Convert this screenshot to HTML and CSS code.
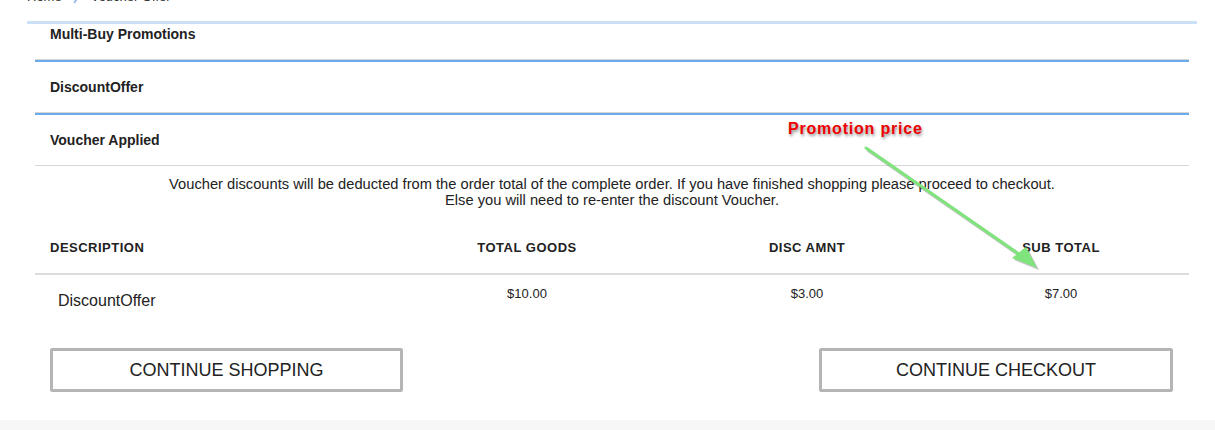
FILE: index.html
```html
<!DOCTYPE html>
<html>
<head>
<meta charset="utf-8">
<link rel="stylesheet" href="styles.css">
</head>
<body>
<div class="page">
  <nav class="breadcrumb">
    <span class="crumb">Home</span>
    <svg class="crumb-sep" width="10" height="14" viewBox="0 0 10 14"><path d="M2 13 L8 5" stroke="#8fb4e6" stroke-width="1.6" fill="none"/></svg>
    <span class="crumb">Voucher Offer</span>
  </nav>
  <div class="panel">
    <div class="panel-inner">
      <div class="section section-first">Multi-Buy Promotions</div>
      <div class="section">DiscountOffer</div>
      <div class="section">Voucher Applied</div>
      <p class="message">Voucher discounts will be deducted from the order total of the complete order. If you have finished shopping please proceed to checkout.<br>Else you will need to re-enter the discount Voucher.</p>
      <div class="table">
        <div class="thead">
          <div class="th th-desc">DESCRIPTION</div>
          <div class="th">TOTAL GOODS</div>
          <div class="th">DISC AMNT</div>
          <div class="th">SUB TOTAL</div>
        </div>
        <div class="trow">
          <div class="td td-desc">DiscountOffer</div>
          <div class="td">$10.00</div>
          <div class="td">$3.00</div>
          <div class="td">$7.00</div>
        </div>
      </div>
      <div class="actions">
        <button class="btn">CONTINUE SHOPPING</button>
        <button class="btn btn-right">CONTINUE CHECKOUT</button>
      </div>
    </div>
  </div>
</div>
<footer class="footer"></footer>

<div class="note">Promotion price</div>
<svg class="arrow" width="1215" height="430" viewBox="0 0 1215 430">
  <g transform="translate(2,2)" opacity="0.35">
    <line x1="866" y1="148" x2="1026" y2="259" stroke="#555" stroke-width="3.5"/>
    <path d="M1037 268 L1012 258 L1026 247 Z" fill="#555"/>
  </g>
  <line x1="866" y1="148" x2="1026" y2="259" stroke="#7fe47c" stroke-width="3" stroke-linecap="round"/>
  <path d="M1037 268 L1012 258 L1026 247 Z" fill="#7fe47c"/>
</svg>
</body>
</html>
```

FILE: styles.css
```css
html, body {
  margin: 0;
  padding: 0;
  background: #ffffff;
}

body {
  font-family: "Liberation Sans", Arial, sans-serif;
  color: #222;
  position: relative;
  height: 430px;
  overflow: hidden;
}

.page {
  display: flow-root;
  height: 420px;
}

.breadcrumb {
  display: flex;
  align-items: center;
  gap: 7px;
  height: 14px;
  margin-top: -10px;
  padding-left: 27px;
  font-size: 13px;
  line-height: 14px;
  color: #333;
}

.crumb-sep {
  display: block;
  margin: 0 2px 0 3px;
}

.panel {
  margin: 17px 18px 0 27px;
  border-top: 3px solid #cce0f5;
}

.panel-inner {
  margin: 0 8px;
}

.section {
  padding: 17px 15px;
  font-size: 14px;
  font-weight: bold;
  line-height: 16px;
  border-top: 2px solid #6aabec;
  border-bottom: 1px solid #d6d6d6;
}

.section-first {
  padding-top: 2px;
  border-top: none;
}

.message {
  margin: 0;
  padding: 10px 0 0;
  text-align: center;
  font-size: 14.7px;
  line-height: 16px;
}

.thead,
.trow {
  display: grid;
  grid-template-columns: 352px 280px 280px 1fr;
  padding-right: 14px;
}

.thead {
  padding-top: 32px;
  padding-bottom: 17px;
  border-bottom: 2px solid #dcdcdc;
}

.th {
  font-size: 13px;
  font-weight: bold;
  letter-spacing: 0.5px;
  line-height: 16px;
  text-align: center;
}

.th-desc {
  text-align: left;
  padding-left: 15px;
}

.trow {
  height: 45px;
  align-items: start;
}

.td {
  font-size: 13px;
  line-height: 16px;
  padding-top: 11px;
  text-align: center;
}

.td-desc {
  text-align: left;
  font-size: 16px;
  line-height: 18px;
  padding-top: 17px;
  padding-left: 23px;
}

.actions {
  display: flex;
  justify-content: space-between;
  padding: 0 16px 0 15px;
  margin-top: 28px;
}

.btn {
  width: 353px;
  height: 44px;
  box-sizing: border-box;
  border: 3px solid #b5b5b5;
  border-radius: 2px;
  background: #fff;
  font-family: "Liberation Sans", Arial, sans-serif;
  font-size: 18px;
  color: #222;
  padding: 0;
}

.btn-right {
  width: 354px;
}

.footer {
  height: 10px;
  background: #f7f7f7;
}

.note {
  position: absolute;
  left: 788px;
  top: 119px;
  font-size: 16px;
  font-weight: bold;
  letter-spacing: 0.8px;
  line-height: 20px;
  color: #ee0000;
  -webkit-text-stroke: 3px #ffffff;
  paint-order: stroke fill;
  text-shadow: 1px 2px 3px rgba(0, 0, 0, 0.45);
}

.arrow {
  position: absolute;
  left: 0;
  top: 0;
  pointer-events: none;
}
```
